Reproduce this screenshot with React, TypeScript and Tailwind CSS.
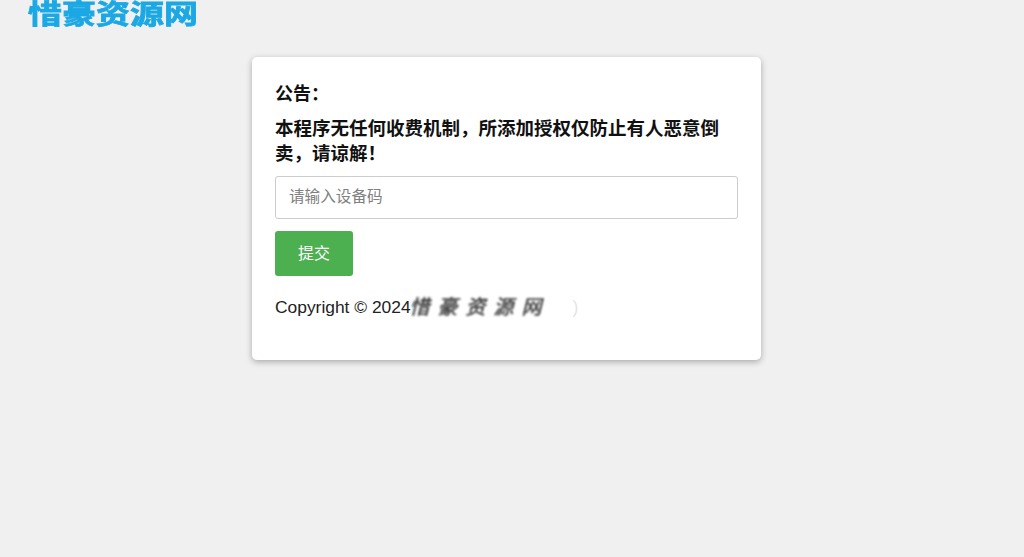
import React from 'react';

const sans = "font-['Liberation_Sans','Noto_Sans_CJK_SC',sans-serif]";

export default function App() {
  return (
    <div className={`h-[557px] overflow-hidden bg-[#f0f0f0] ${sans}`}>
      <div className="ml-[28px] h-[57px] pt-[1px]">
        <div className="origin-top scale-y-[0.8] text-[34px] leading-[34px] font-bold text-[#1ba8e4] [-webkit-text-stroke:1px_#1ba8e4]">
          惜豪资源网
        </div>
      </div>

      <div className="ml-[252px] h-[303px] w-[509px] rounded-[5px] bg-white px-[23px] pt-[24px] shadow-[0_2px_6px_rgba(0,0,0,0.3)]">
        <p className="text-[18px] leading-[26px] font-bold text-[#111]">公告：</p>
        <p className="mt-[9px] text-[18.5px] leading-[25px] font-bold text-[#111]">
          本程序无任何收费机制，所添加授权仅防止有人恶意倒卖，请谅解！
        </p>
        <input
          type="text"
          placeholder="请输入设备码"
          className="mt-[10px] block h-[43px] w-[463px] rounded-[3px] border border-[#ccc] px-[13px] pb-[2px] text-[15.6px] outline-none placeholder:text-[#808080]"
        />
        <button className="mt-[12px] block h-[45px] w-[78px] rounded-[3px] bg-[#4caf50] text-[16px] text-white">
          提交
        </button>
        <p className="mt-[18px] flex h-[26px] items-center text-[17.4px] leading-[26px] text-[#222]">
          <span>Copyright © 2024</span>
          <span className="ml-[-1px] text-[20px] tracking-[8px] text-[#333] italic blur-[1px] [-webkit-text-stroke:0.5px_#444]">惜豪资源网</span>
          <span className="ml-[23px] text-[18px] text-[#e4e4e4] blur-[0.6px]">)</span>
        </p>
      </div>
    </div>
  );
}
